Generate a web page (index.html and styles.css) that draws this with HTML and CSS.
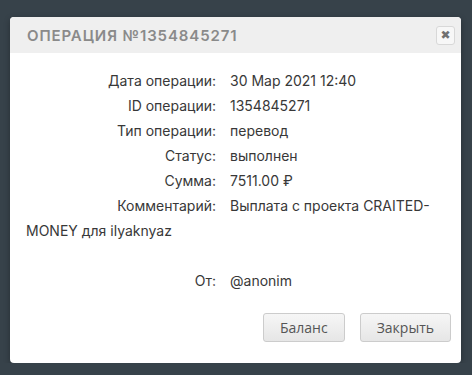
FILE: index.html
```html
<!DOCTYPE html>
<html lang="ru">
<head>
    <meta charset="UTF-8">
    <meta name="viewport" content="width=device-width, initial-scale=1.0">
    <title>Операция</title>
    <link rel="stylesheet" href="styles.css">
</head>
<body>
    <div class="modal">
        <!-- шапка -->
        <div class="modal-header">
            <h3 class="modal-title">Операция №1354845271</h3>
            <button class="close-btn" type="button">&#10006;</button>
        </div>

        <!-- данные операции -->
        <div class="modal-body">
            <div class="row"><span class="label">Дата операции:</span>30 Мар 2021 12:40</div>
            <div class="row"><span class="label">ID операции:</span>1354845271</div>
            <div class="row"><span class="label">Тип операции:</span>перевод</div>
            <div class="row"><span class="label">Статус:</span>выполнен</div>
            <div class="row"><span class="label">Сумма:</span>7511.00 ₽</div>
            <div class="row"><span class="label">Комментарий:</span>Выплата с проекта CRAITED-MONEY для ilyaknyaz</div>
            <div class="row empty"></div>
            <div class="row"><span class="label">От:</span>@anonim</div>
        </div>

        <div class="modal-footer">
            <button class="btn" type="button">Баланс</button>
            <button class="btn" type="button">Закрыть</button>
        </div>
    </div>
</body>
</html>
```

FILE: styles.css
```css
* {
    margin: 0;
    padding: 0;
    box-sizing: border-box;
}

body {
    background: #37424a;
    padding: 17px 11px 0 10px;
    font-family: 'Inter', 'Open Sans', sans-serif;
}

.modal {
    background: #fff;
    border-radius: 4px;
    overflow: hidden;
    box-shadow: 0 2px 6px rgba(0, 0, 0, 0.3);
}

.modal-header {
    display: flex;
    justify-content: space-between;
    align-items: center;
    height: 36px;
    padding: 0 6px 0 17px;
    background: #efefef;
}

.modal-title {
    font-size: 15px;
    font-weight: 600;
    letter-spacing: 0.9px;
    text-transform: uppercase;
    color: #8a8a8a;
}

.close-btn {
    width: 19px;
    height: 19px;
    border: 1px solid #d8d8d8;
    border-radius: 3px;
    background: #f7f7f7;
    color: #707070;
    font-size: 12px;
    font-weight: bold;
    line-height: 17px;
    font-family: 'DejaVu Sans', sans-serif;
}

.modal-body {
    padding: 15px 16px 0 16px;
    color: #383838;
    font-size: 14px;
    line-height: 25px;
}

.row.empty {
    height: 25px;
}

.label {
    display: inline-block;
    width: 190px;
    margin-right: 14px;
    text-align: right;
}

.modal-footer {
    display: flex;
    justify-content: flex-end;
    gap: 15px;
    padding: 20px 10px 21px;
}

.btn {
    height: 29px;
    padding: 0 16px;
    border: 1px solid #ccc;
    border-radius: 3px;
    background: linear-gradient(#f6f6f6, #e6e6e6);
    color: #555;
    font-family: 'Open Sans', sans-serif;
    font-size: 14px;
}
```
